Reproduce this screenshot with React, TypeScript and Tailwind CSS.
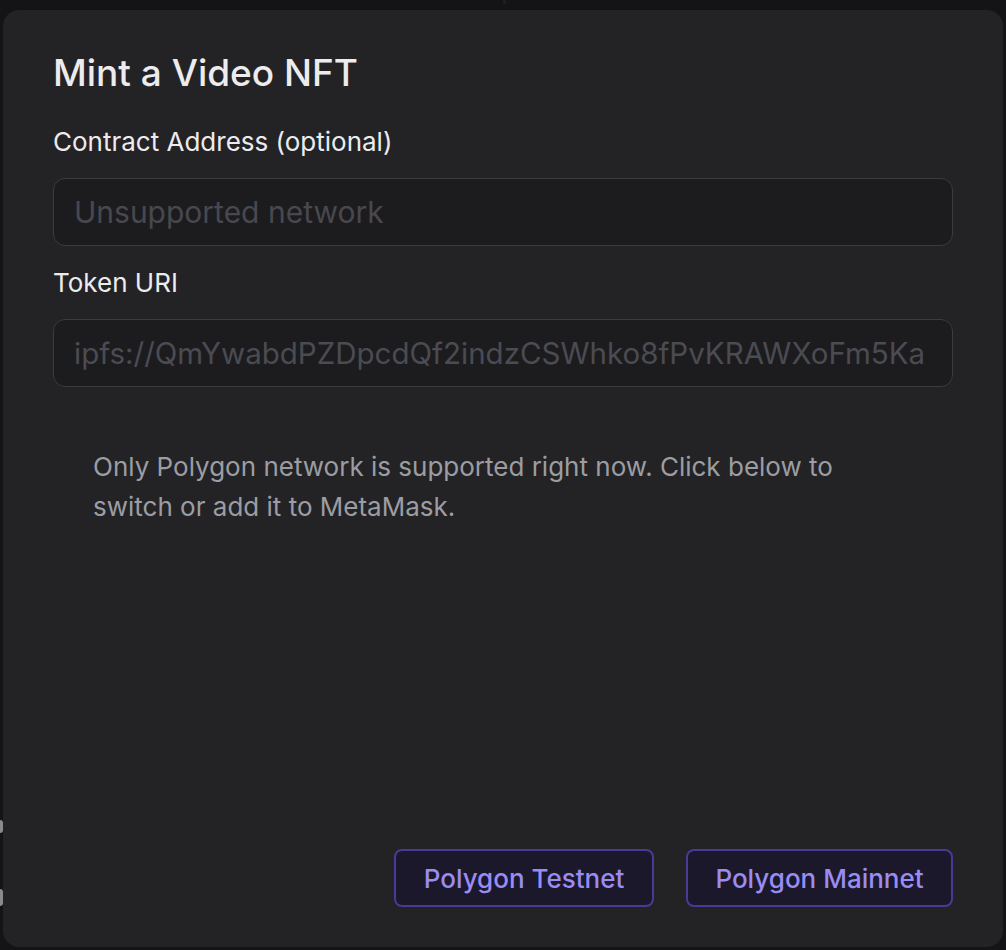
export default function App() {
  return (
    <div className="relative h-[950px] w-[1006px] overflow-hidden bg-[#141416] font-['Inter',sans-serif]">
      {/* bits of the page behind the dialog */}
      <div className="absolute left-[-6px] top-[820px] h-[13px] w-[9px] rounded-[3px] bg-[#8a8a8e]" />
      <div className="absolute left-[-6px] top-[889px] h-[17px] w-[9px] rounded-[3px] bg-[#8a8a8e]" />
      <div className="absolute left-[503px] top-0 h-[4px] w-[3px] bg-[#1e1e21]" />

      <div className="relative ml-[3px] mt-[10px] flex h-[937px] w-[1000px] flex-col rounded-[16px] bg-[#232326] px-[50px] pb-[40px] pt-[42px]">
        <h2 className="text-[37px] font-medium leading-[42px] text-[#ececee]">Mint a Video NFT</h2>

        <label className="mt-[32px] text-[26px] leading-[32px] text-[#ececee]">Contract Address (optional)</label>
        <input
          className="mt-[20px] h-[68px] w-full rounded-[12px] border border-[#3b3b40] bg-[#1c1c1f] px-[20px] text-[30px] text-[#4b4b52] outline-none placeholder:text-[#48484e]"
          placeholder="Unsupported network"
          disabled
        />

        <label className="mt-[21px] text-[26px] leading-[32px] text-[#ececee]">Token URI</label>
        <input
          className="mt-[20px] h-[68px] w-full rounded-[12px] border border-[#3b3b40] bg-[#1c1c1f] px-[20px] text-[29.5px] text-[#4b4b52] outline-none"
          value="ipfs://QmYwabdPZDpcdQf2indzCSWhko8fPvKRAWXoFm5Ka"
          readOnly
          disabled
        />

        <p className="mt-[60px] w-[860px] px-[40px] text-[26px] leading-[40px] text-[#9c9da3]">
          Only Polygon network is supported right now. Click below to switch or add it to MetaMask.
        </p>

        <div className="mt-auto flex justify-end gap-[32px]">
          <button className="h-[58px] w-[260px] rounded-[8px] border-2 border-[#463c98] bg-[#1b182b] text-[26px] font-medium text-[#9a8cf2]">
            Polygon Testnet
          </button>
          <button className="h-[58px] w-[267px] rounded-[8px] border-2 border-[#463c98] bg-[#1b182b] text-[26px] font-medium text-[#9a8cf2]">
            Polygon Mainnet
          </button>
        </div>
      </div>
    </div>
  );
}
